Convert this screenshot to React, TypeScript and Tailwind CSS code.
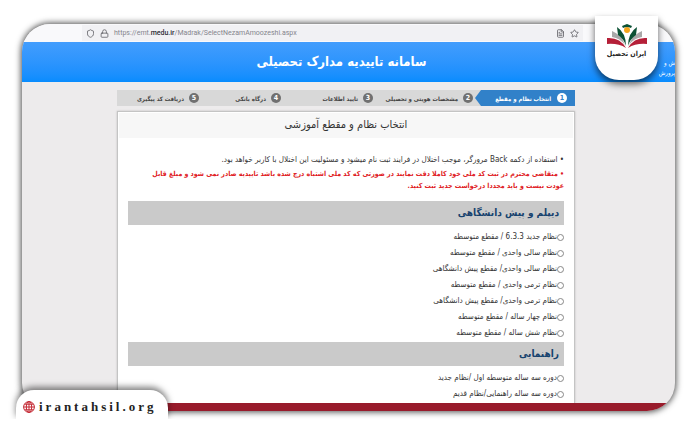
import { Lock, Shield, Star, FileText } from "lucide-react";

const steps = [
  "انتخاب نظام و مقطع",
  "مشخصات هویتی و تحصیلی",
  "تایید اطلاعات",
  "درگاه بانکی",
  "دریافت کد پیگیری",
];

const sections = [
  {
    title: "دیپلم و پیش دانشگاهی",
    options: [
      "نظام جدید 6.3.3 / مقطع متوسطه",
      "نظام سالی واحدی / مقطع متوسطه",
      "نظام سالی واحدی/ مقطع پیش دانشگاهی",
      "نظام ترمی واحدی / مقطع متوسطه",
      "نظام ترمی واحدی/ مقطع پیش دانشگاهی",
      "نظام چهار ساله / مقطع متوسطه",
      "نظام شش ساله / مقطع متوسطه",
    ],
  },
  {
    title: "راهنمایی",
    options: ["دوره سه ساله متوسطه اول /نظام جدید", "دوره سه ساله راهنمایی/نظام قدیم"],
  },
];

function AddressBar() {
  return (
    <div className="flex h-[18px] items-center bg-[#f9f9fb] pr-[92px] pl-[60px]">
      <div className="flex h-4 flex-1 items-center gap-[5px] bg-[#f1f1f4] px-1 text-[#55555c]">
        <Shield size={9} strokeWidth={2} />
        <Lock size={9} strokeWidth={2} />
        <a href="#" className="flex-1 font-['Roboto',sans-serif] text-[7px] leading-4 text-[#85858d]">
          https://emt.<span className="font-medium text-[#2b2b33]">medu.ir</span>
          /Madrak/SelectNezamAmoozeshi.aspx
        </a>
        <FileText size={9} strokeWidth={2} />
        <Star size={9} strokeWidth={2} />
      </div>
    </div>
  );
}

function Steps() {
  return (
    <ol className="grid h-4 grid-cols-[94fr_100fr_92fr_82fr_90fr] bg-[#d8d8d8] text-[6px] font-bold text-[#444]">
      {steps.map((label, i) => (
        <li
          key={label}
          className={
            i === 0
              ? "relative flex items-center gap-[6px] bg-[#3181c9] pr-2 whitespace-nowrap text-white"
              : "flex items-center gap-[5px] pr-2 whitespace-nowrap"
          }
        >
          <span
            className={
              i === 0
                ? "flex size-[10px] items-center justify-center rounded-full bg-white text-[7px] text-[#3181c9]"
                : "flex size-[10px] items-center justify-center rounded-full bg-[#707070] text-[7px] text-white"
            }
          >
            {i + 1}
          </span>
          {label}
          {i === 0 && (
            <svg viewBox="0 0 6 16" className="absolute top-0 right-full h-4 w-[6px]" aria-hidden="true">
              <path d="M6 0 L0 8 L6 16 Z" fill="#3181c9" />
            </svg>
          )}
        </li>
      ))}
    </ol>
  );
}

function LogoBadge() {
  return (
    <div className="absolute top-4 right-[42px] flex h-16 w-[63px] flex-col items-center rounded-b-[24px] bg-white pt-[7px] shadow-[0_4px_7px_rgba(0,0,0,0.6)]">
      <svg viewBox="0 0 42 26" className="h-[26px] w-[42px]" aria-hidden="true">
        <path d="M1 15 Q14 14 20 25 Q12 20 1 21 Z" fill="#b51f38" />
        <path d="M41 15 Q28 14 22 25 Q30 20 41 21 Z" fill="#b51f38" />
        <path d="M6 8 Q16 12 19 22 Q14 15 6 14 Z" fill="#a9a9a9" />
        <path d="M36 8 Q26 12 23 22 Q28 15 36 14 Z" fill="#a9a9a9" />
        <path d="M11 4 Q20 10 20 23 Q18 16 12 12 Z" fill="#0b5134" />
        <path d="M31 4 Q22 10 22 23 Q24 16 30 12 Z" fill="#0b5134" />
        <circle cx="21" cy="7" r="3" fill="#f4a51c" />
        <path d="M16 3 L21 1 L26 3 L25 5 Q21 3 17 5 Z" fill="#0b5134" />
      </svg>
      <span className="text-[7px] leading-[11px] font-bold whitespace-nowrap text-[#222]">ایران تحصیل</span>
    </div>
  );
}

function SiteTab() {
  return (
    <div className="absolute bottom-[-8px] left-[-6px]">
      <a
        href="#"
        dir="ltr"
        className="flex h-[29px] w-[152px] items-center gap-1 rounded-t-[18px] bg-white px-[7px] pt-1 font-['Liberation_Serif',serif] text-[13px] font-bold text-[#222] shadow-[0_-3px_6px_rgba(0,0,0,0.5)]"
      >
        <svg viewBox="0 0 12 12" className="size-3 shrink-0" fill="none" stroke="#c32732" strokeWidth="1" aria-hidden="true">
          <circle cx="6" cy="6" r="5.4" />
          <ellipse cx="6" cy="6" rx="2.7" ry="5.4" />
          <path d="M6 0.6 V11.4 M0.6 6 H11.4 M1.6 3.2 H10.4 M1.6 8.8 H10.4" />
        </svg>
        <span className="tracking-[3px]">irantahsil.org</span>
      </a>
      <div className="absolute inset-x-[-8px] top-full h-3 bg-white" />
    </div>
  );
}

export default function App() {
  return (
    <div className="relative min-h-screen bg-white pt-6 pr-[25px] pb-[18px] pl-[22px] font-['DejaVu_Sans_Condensed','DejaVu_Sans',sans-serif]">
      <div className="relative">
        <div className="overflow-hidden rounded-[28px] bg-[#edebec] shadow-[0_0_6px_1px_rgba(0,0,0,0.7)]">
          <AddressBar />
          <header dir="rtl" className="relative flex h-10 items-center justify-center bg-linear-to-b from-[#429dfd] to-[#078cfe]">
            <h1 className="pr-[14px] text-[13px] font-bold text-white">سامانه تاییدیه مدارک تحصیلی</h1>
            <span className="absolute right-0 bottom-1 text-[6px] leading-[10px] text-white">
              ش و
              <br />
              پرورش
            </span>
          </header>

          <main dir="rtl" className="pt-2 pr-[100px] pl-[95px]">
            <Steps />
            <div className="mt-[5px] border border-b-0 border-[#c4c4c4] bg-white px-px pt-px shadow-[0_0_2px_rgba(0,0,0,0.2)]">
              <h2 className="h-[25px] bg-[#f7f7f7] text-center text-[11px] leading-6 text-[#333]">
                انتخاب نظام و مقطع آموزشی
              </h2>
              <div className="px-[9px] pt-[14px] text-[8px] text-[#333]">
                <p className="leading-4">
                  • استفاده از دکمه Back مرورگر، موجب اختلال در فرایند ثبت نام میشود و مسئولیت این اختلال با کاربر
                  خواهد بود.
                </p>
                <p className="mb-[9px] text-[7px] leading-3 font-bold text-[#e01b24]">
                  • متقاضی محترم در ثبت کد ملی خود کاملا دقت نمایند در صورتی که کد ملی اشتباه درج شده باشد تاییدیه
                  صادر نمی شود و مبلغ قابل
                  <br />
                  عودت نیست و باید مجددا درخواست جدید ثبت کنید.
                </p>
                {sections.map((section) => (
                  <fieldset key={section.title} className="pb-px">
                    <legend className="mb-1 h-6 w-full bg-[#cacaca] px-[5px] text-[10px] leading-6 font-bold text-[#17426e]">
                      {section.title}
                    </legend>
                    {section.options.map((option) => (
                      <label key={option} className="flex h-4 items-center">
                        <input
                          type="radio"
                          name="system"
                          className="size-[7px] appearance-none rounded-full border border-[#888] bg-white checked:bg-[#3181c9]"
                        />
                        {option}
                      </label>
                    ))}
                  </fieldset>
                ))}
              </div>
            </div>
          </main>
          <div className="h-2 bg-[#981b2b]" />
        </div>
        <SiteTab />
      </div>
      <LogoBadge />
    </div>
  );
}
